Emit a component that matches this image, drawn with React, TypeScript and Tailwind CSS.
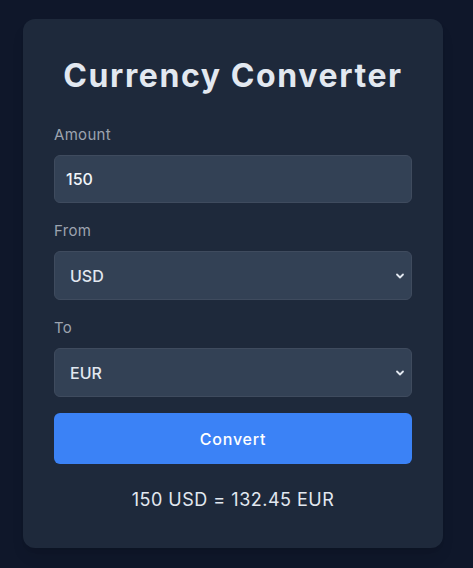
import React, { useState } from "react";

const Chevron = () => (
  <svg className="pointer-events-none absolute right-[6px] top-1/2 -translate-y-1/2" width="12" height="12" viewBox="0 0 12 12" fill="none">
    <path d="M3 4.5L6 7.5L9 4.5" stroke="#e2e8f0" strokeWidth="1.8" strokeLinecap="round" strokeLinejoin="round" />
  </svg>
);

export default function App() {
  const [amount, setAmount] = useState("150");
  const [from, setFrom] = useState("USD");
  const [to, setTo] = useState("EUR");
  return (
    <div className="min-h-[568px] w-full bg-[#0f172a] pt-[19px] pl-[23px]" style={{ fontFamily: "Inter, 'Noto Sans', sans-serif" }}>
      <div className="w-[420px] rounded-xl bg-[#1e293b] px-[31px] pt-[39px] pb-[34px] shadow-lg">
        <h1 className="mb-[29px] text-center text-[32px] font-bold leading-[36px] tracking-[1.6px] text-[#e2e8f0]">Currency Converter</h1>
        <label className="mb-2 block text-[15px] leading-6 tracking-[0.3px] text-[#9ca3af]">Amount</label>
        <input
          value={amount}
          onChange={(e) => setAmount(e.target.value)}
          className="mb-4 block h-[48px] w-[358px] rounded-md border border-[#3f4b5e] bg-[#334155] px-[11px] text-[16px] font-medium text-[#f1f5f9] outline-none"
        />
        <label className="mb-2 block text-[15px] leading-6 tracking-[0.3px] text-[#9ca3af]">From</label>
        <div className="relative mb-4 w-[358px]">
          <select
            value={from}
            onChange={(e) => setFrom(e.target.value)}
            className="block h-[49px] w-full appearance-none rounded-md border border-[#3f4b5e] bg-[#334155] px-[15px] text-[16px] font-medium text-[#e2e8f0] outline-none"
          >
            <option>USD</option>
            <option>EUR</option>
            <option>GBP</option>
          </select>
          <Chevron />
        </div>
        <label className="mb-2 block text-[15px] leading-6 tracking-[0.3px] text-[#9ca3af]">To</label>
        <div className="relative mb-4 w-[358px]">
          <select
            value={to}
            onChange={(e) => setTo(e.target.value)}
            className="block h-[49px] w-full appearance-none rounded-md border border-[#3f4b5e] bg-[#334155] px-[15px] text-[16px] font-medium text-[#e2e8f0] outline-none"
          >
            <option>EUR</option>
            <option>USD</option>
            <option>GBP</option>
          </select>
          <Chevron />
        </div>
        <button className="block h-[51px] w-[358px] rounded-md bg-[#3b82f6] text-[16px] font-medium tracking-[0.8px] text-white">Convert</button>
        <p className="mt-[22px] text-center text-[18px] leading-7 tracking-[0.5px] text-[#e2e8f0]">150 USD = 132.45 EUR</p>
      </div>
    </div>
  );
}
